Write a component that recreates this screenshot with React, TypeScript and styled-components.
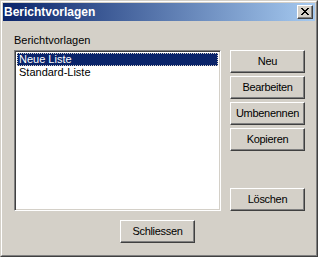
import React from "react";
import styled, { createGlobalStyle } from "styled-components";

const Global = createGlobalStyle`
  html, body { margin: 0; padding: 0; background: #d4d0c8; }
  body { font-family: "Liberation Sans", Arial, sans-serif; font-size: 11px; }
  * { box-sizing: border-box; }
`;

const Window = styled.div`
  width: 318px;
  height: 257px;
  background: #d4d0c8;
  border: 1px solid;
  border-color: #d4d0c8 #404040 #404040 #d4d0c8;
  display: flex;
  flex-direction: column;
`;

const Inner = styled.div`
  flex: 1;
  border: 1px solid;
  border-color: #ffffff #808080 #808080 #ffffff;
  padding: 1px;
  display: flex;
  flex-direction: column;
`;

const TitleBar = styled.div`
  height: 18px;
  background: linear-gradient(to right, #0a246a, #a6caf0);
  display: flex;
  align-items: center;
  justify-content: space-between;
  padding: 0 2px 0 1px;
`;

const Title = styled.span`
  color: #fff;
  font-weight: bold;
  font-size: 12px;
  line-height: 18px;
`;

const CloseButton = styled.div`
  width: 16px;
  height: 14px;
  background: #d4d0c8;
  border: 1px solid;
  border-color: #ffffff #404040 #404040 #ffffff;
  box-shadow: inset -1px -1px 0 #808080;
  display: flex;
  align-items: center;
  justify-content: center;
  padding: 0 1px 1px 0;
`;

const Body = styled.div`
  flex: 1;
  padding: 13px 0 0 11px;
  display: grid;
  grid-template-columns: 207px 75px;
  grid-template-rows: 13px 161px auto;
  column-gap: 9px;
  row-gap: 3px;
`;

const Label = styled.div`
  grid-column: 1;
  grid-row: 1;
  line-height: 13px;
  color: #000;
`;

const ListBox = styled.div`
  grid-column: 1;
  grid-row: 2;
  background: #fff;
  border: 1px solid;
  border-color: #808080 #ffffff #ffffff #808080;
  box-shadow: inset 1px 1px 0 #404040, inset -1px -1px 0 #d4d0c8;
  padding: 2px;
`;

const Item = styled.div<{ $selected?: boolean }>`
  height: 13px;
  line-height: 12px;
  padding-left: 2px;
  color: ${(p) => (p.$selected ? "#fff" : "#000")};
  background: ${(p) => (p.$selected ? "#0a246a" : "transparent")};
  outline: ${(p) => (p.$selected ? "1px dotted #d4d0c8" : "none")};
  outline-offset: -1px;
  white-space: nowrap;
`;

const ButtonColumn = styled.div`
  grid-column: 2;
  grid-row: 2;
  display: flex;
  flex-direction: column;
  gap: 3px;
`;

const Button = styled.button<{ $push?: boolean }>`
  width: 75px;
  height: 23px;
  padding: 0 0 1px 0;
  margin-top: ${(p) => (p.$push ? "auto" : "0")};
  background: #d4d0c8;
  border: 1px solid;
  border-color: #ffffff #404040 #404040 #ffffff;
  box-shadow: inset -1px -1px 0 #808080;
  font-family: "Liberation Sans", Arial, sans-serif;
  font-size: 11px;
  letter-spacing: -0.3px;
  color: #000;
  flex-shrink: 0;
`;

const Footer = styled.div`
  grid-column: 1 / span 2;
  grid-row: 3;
  display: flex;
  justify-content: flex-start;
  padding: 6px 0 0 106px;
`;

export default function App() {
  return (
    <>
      <Global />
      <Window>
        <Inner>
          <TitleBar>
            <Title>Berichtvorlagen</Title>
            <CloseButton>
              <svg width="8" height="7" viewBox="0 0 8 7">
                <path
                  d="M0 0h2v1h1v1h2V1h1V0h2v1H7v1H6v1H5v1h1v1h1v1h1v1H6V6H5V5H3v1H2v1H0V6h1V5h1V4h1V3H2V2H1V1H0z"
                  fill="#000"
                />
              </svg>
            </CloseButton>
          </TitleBar>
          <Body>
            <Label>Berichtvorlagen</Label>
            <ListBox>
              <Item $selected>Neue Liste</Item>
              <Item>Standard-Liste</Item>
            </ListBox>
            <ButtonColumn>
              <Button>Neu</Button>
              <Button>Bearbeiten</Button>
              <Button>Umbenennen</Button>
              <Button>Kopieren</Button>
              <Button $push>Löschen</Button>
            </ButtonColumn>
            <Footer>
              <Button>Schliessen</Button>
            </Footer>
          </Body>
        </Inner>
      </Window>
    </>
  );
}
